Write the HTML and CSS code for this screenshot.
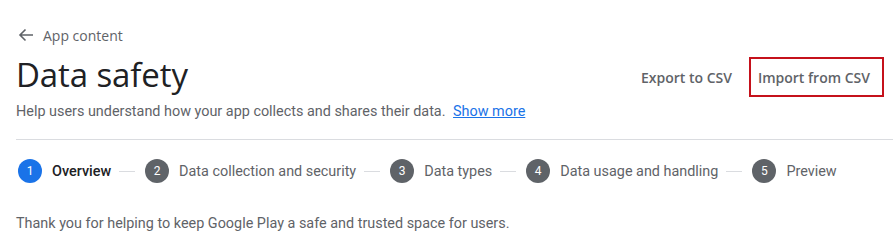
FILE: index.html
```html
<!DOCTYPE html>
<html lang="en">
    <head>
        <meta charset="UTF-8">
        <title>Data safety</title>
        <link rel="stylesheet" href="styles.css">
    </head>
    <body>
        <div class="page">
            <a class="back" href="#">
                <svg width="16" height="16" viewBox="0 0 16 16"><path d="M15 8H2M7.5 2.5L2 8l5.5 5.5" fill="none" stroke="#5f6368" stroke-width="1.6"/></svg>
                <span>App content</span>
            </a>
            <div class="title-row">
                <h1>Data safety</h1>
                <div class="actions">
                    <button class="text-btn">Export to CSV</button>
                    <button class="text-btn highlighted">Import from CSV</button>
                </div>
            </div>
            <p class="subtitle">Help users understand how your app collects and shares their data. <a href="#">Show more</a></p>
            <hr class="divider">
            <div class="stepper">
                <div class="step active"><span class="num">1</span><span class="label">Overview</span></div>
                <span class="line"></span>
                <div class="step"><span class="num">2</span><span class="label">Data collection and security</span></div>
                <span class="line"></span>
                <div class="step"><span class="num">3</span><span class="label">Data types</span></div>
                <span class="line"></span>
                <div class="step"><span class="num">4</span><span class="label">Data usage and handling</span></div>
                <span class="line"></span>
                <div class="step"><span class="num">5</span><span class="label">Preview</span></div>
            </div>
            <p class="intro">Thank you for helping to keep Google Play a safe and trusted space for users.</p>
        </div>
    </body>
</html>
```

FILE: styles.css
```css
body {
    margin: 0;
    font-family: Roboto, Arial, sans-serif;
    color: #5f6368;
    background: #fff;
}
.page {
    padding: 25px 0 0 16px;
}
.back {
    display: flex;
    align-items: center;
    gap: 9px;
    padding-left: 2px;
    height: 20px;
    color: #5f6368;
    text-decoration: none;
    font-family: "Open Sans", sans-serif;
    font-size: 14px;
}
.title-row {
    display: flex;
    justify-content: space-between;
    align-items: center;
    margin-top: 9px;
    height: 40px;
}
h1 {
    margin: 0;
    font-family: "Open Sans", sans-serif;
    font-weight: 400;
    font-size: 33px;
    color: #202124;
    letter-spacing: -0.1px;
}
.actions {
    display: flex;
    align-items: center;
    gap: 15px;
    margin-right: 9px;
    margin-top: 6px;
}
.text-btn {
    background: none;
    border: 2px solid transparent;
    font-family: "Open Sans", sans-serif;
    font-weight: 600;
    font-size: 14px;
    color: #5f6368;
    padding: 0;
    height: 40px;
    cursor: pointer;
}
.highlighted {
    border-color: #c5111b;
    padding: 0 12px 0 7px;
}
.subtitle {
    margin: 8px 0 0;
    font-size: 14.4px;
    line-height: 20px;
}
.subtitle a {
    color: #1a73e8;
    margin-left: 4px;
}
.divider {
    margin: 17px 0 0;
    border: 0;
    border-top: 1px solid #dadce0;
}
.stepper {
    display: flex;
    align-items: center;
    margin-top: 18px;
    padding-left: 2px;
    height: 26px;
}
.step {
    display: flex;
    align-items: center;
    gap: 10px;
}
.num {
    width: 24px;
    height: 24px;
    border-radius: 50%;
    background: #5f6368;
    color: #fff;
    font-size: 12px;
    display: flex;
    align-items: center;
    justify-content: center;
}
.active .num {
    background: #1a73e8;
}
.label {
    font-size: 14.4px;
    color: #5f6368;
}
.active .label {
    color: #202124;
    font-weight: 500;
}
.line {
    width: 16px;
    border-top: 1px solid #dadce0;
    margin: 0 10px 0 8px;
}
.intro {
    margin: 30px 0 0;
    font-size: 14.4px;
    line-height: 20px;
}
```
